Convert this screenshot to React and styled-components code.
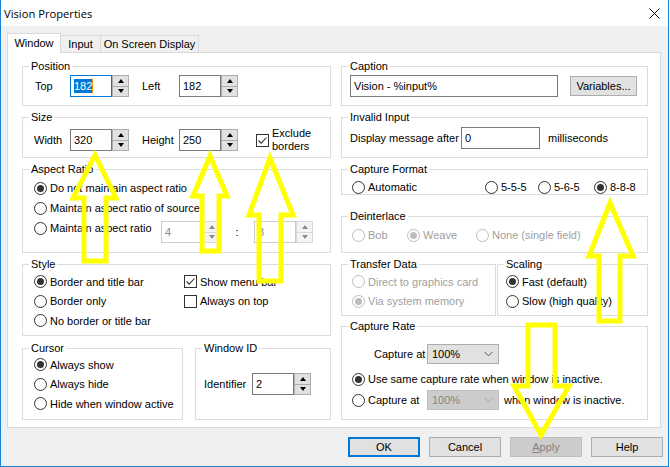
import React from 'react';
import styled, { createGlobalStyle } from 'styled-components';

const GlobalStyle = createGlobalStyle`
  html, body {
    margin: 0;
    padding: 0;
    background: #ffffff;
  }
  body {
    font-family: "Liberation Sans", Arial, sans-serif;
    font-size: 11px;
    color: #000;
  }
`;

const Stage = styled.div`
  position: relative;
  width: 670px;
  height: 467px;
  overflow: hidden;
`;

const Window = styled.div`
  box-sizing: border-box;
  width: 669px;
  height: 467px;
  background: #f0f0f0;
  border: 1px solid #1883d7;
  border-top: none;
  display: flex;
  flex-direction: column;
`;

const TitleBar = styled.div`
  flex: none;
  height: 26px;
  background: #ffffff;
  display: flex;
  align-items: center;
  justify-content: space-between;
  padding: 0 8px 0 3px;
  font-family: "Segoe UI", "Open Sans", "Noto Sans", sans-serif;
  font-size: 11.2px;
`;

const Body = styled.div`
  flex: 1;
  display: flex;
  flex-direction: column;
  padding: 7px 7px 0 6px;
`;

const TabStrip = styled.div`
  position: relative;
  z-index: 1;
  display: flex;
  align-items: flex-end;
  height: 19px;
`;

const Tab = styled.div`
  box-sizing: border-box;
  position: relative;
  z-index: ${p => (p.$active ? 2 : 1)};
  width: ${p => p.$w}px;
  height: ${p => (p.$active ? 20 : 17)}px;
  margin-bottom: ${p => (p.$active ? -1 : 0)}px;
  margin-left: ${p => (p.$first ? 0 : -1)}px;
  padding-bottom: ${p => (p.$active ? 2 : 0)}px;
  background: ${p => (p.$active ? '#ffffff' : '#f0f0f0')};
  border: 1px solid #d9d9d9;
  border-bottom: none;
  display: flex;
  align-items: center;
  justify-content: center;
`;

const Panel = styled.div`
  box-sizing: border-box;
  height: 376px;
  background: #ffffff;
  border: 1px solid #d9d9d9;
  padding: 13px 0 0 14px;
  display: grid;
  grid-template-columns: 309px 307px;
  column-gap: 10px;
  align-items: start;
`;

const Column = styled.div`
  display: flex;
  flex-direction: column;
`;

const Pair = styled.div`
  display: flex;
  gap: ${p => p.$gap}px;
  margin-top: ${p => p.$mt || 0}px;
`;

/* group box: the caption sits on the top border line */
const Group = styled.section`
  box-sizing: border-box;
  flex: ${p => (p.$grow ? '1 1 0' : 'none')};
  margin-top: ${p => p.$mt || 0}px;
  height: ${p => p.$h}px;
  width: ${p => (p.$w ? `${p.$w}px` : 'auto')};
  min-width: 0;
  border: 1px solid #dcdcdc;
  display: flex;
  flex-direction: column;
  align-items: flex-start;
`;

const Legend = styled.div`
  margin: -7px 0 0 6px;
  padding: 0 2px;
  height: 13px;
  line-height: 13px;
  background: #ffffff;
  white-space: nowrap;
`;

const Content = styled.div`
  align-self: stretch;
  padding: ${p => p.$pad};
  display: flex;
  flex-direction: ${p => (p.$row ? 'row' : 'column')};
  align-items: ${p => (p.$row ? 'center' : 'stretch')};
`;

const Row = styled.div`
  display: flex;
  align-items: center;
  height: ${p => p.$h || 22}px;
  margin-top: ${p => p.$mt || 0}px;
`;

const Grid2 = styled.div`
  display: grid;
  grid-template-columns: ${p => p.$cols};
`;

const Label = styled.span`
  flex: none;
  width: ${p => (p.$w ? `${p.$w}px` : 'auto')};
  margin-left: ${p => p.$ml || 0}px;
  white-space: nowrap;
`;

const Spacer = styled.span`
  flex: none;
  width: ${p => p.$w}px;
`;

const TwoLines = styled.span`
  line-height: 13px;
`;

/* radio + checkbox */

const Option = styled.div`
  flex: none;
  display: flex;
  align-items: center;
  height: ${p => p.$h || 19.5}px;
  width: ${p => (p.$w ? `${p.$w}px` : 'auto')};
  color: ${p => (p.$disabled ? '#a0a0a0' : '#000')};
  white-space: nowrap;
`;

const RadioDot = styled.span`
  box-sizing: border-box;
  flex: none;
  width: 13px;
  height: 13px;
  margin-right: 3px;
  border-radius: 50%;
  border: 1px solid ${p => (p.$disabled ? '#bcbcbc' : '#333333')};
  background: #ffffff;
  display: flex;
  align-items: center;
  justify-content: center;

  &::after {
    content: '';
    display: ${p => (p.$checked ? 'block' : 'none')};
    width: 7px;
    height: 7px;
    border-radius: 50%;
    background: ${p => (p.$disabled ? '#bcbcbc' : '#333333')};
  }
`;

const CheckBox = styled.span`
  box-sizing: border-box;
  flex: none;
  width: 13px;
  height: 13px;
  margin-right: 3px;
  border: 1px solid #333333;
  background: #ffffff;
  display: flex;
  align-items: center;
  justify-content: center;
`;

const Radio = ({ children, checked, disabled, w, h }) => (
  <Option $disabled={disabled} $w={w} $h={h}>
    <RadioDot $checked={checked} $disabled={disabled} />
    {children}
  </Option>
);

const Check = ({ children, checked, h }) => (
  <Option $h={h}>
    <CheckBox>
      {checked && (
        <svg width="11" height="11" viewBox="0 0 11 11">
          <path d="M1.5 5.5 L4.2 8.2 L9.5 2.5" fill="none" stroke="#333" strokeWidth="1.1" />
        </svg>
      )}
    </CheckBox>
    {children}
  </Option>
);

/* text boxes and spinners */

const TextBox = styled.div`
  box-sizing: border-box;
  flex: none;
  width: ${p => p.$w}px;
  height: 22px;
  padding-left: 3px;
  border: 1px solid ${p => (p.$focus ? '#0078d7' : p.$disabled ? '#cccccc' : '#7a7a7a')};
  background: #ffffff;
  color: ${p => (p.$disabled ? '#8a8a8a' : '#000')};
  display: flex;
  align-items: center;
  white-space: nowrap;
`;

const Selected = styled.span`
  background: #0078d7;
  color: #ffffff;
  line-height: 14px;
  border-right: 1px solid #ff8c00;
`;

const Spin = styled.div`
  flex: none;
  display: flex;
  height: 22px;
`;

const SpinButtons = styled.div`
  box-sizing: border-box;
  width: 17px;
  height: 22px;
  display: flex;
  flex-direction: column;
`;

const SpinBtn = styled.div`
  box-sizing: border-box;
  flex: 1;
  margin-top: ${p => (p.$down ? -1 : 0)}px;
  background: ${p => (p.$disabled ? '#f4f4f4' : '#e1e1e1')};
  border: 1px solid ${p => (p.$disabled ? '#d9d9d9' : '#adadad')};
  display: flex;
  align-items: center;
  justify-content: center;
`;

const Tri = styled.span`
  width: 0;
  height: 0;
  border-left: 3.5px solid transparent;
  border-right: 3.5px solid transparent;
  ${p =>
    p.$up
      ? `border-bottom: 4px solid ${p.$disabled ? '#8a8a8a' : '#000'};`
      : `border-top: 4px solid ${p.$disabled ? '#8a8a8a' : '#000'};`}
`;

const SpinBox = ({ value, focus, disabled }) => (
  <Spin>
    <TextBox $w={42} $focus={focus} $disabled={disabled}>
      {focus ? <Selected>{value}</Selected> : value}
    </TextBox>
    <SpinButtons>
      <SpinBtn $disabled={disabled}>
        <Tri $up $disabled={disabled} />
      </SpinBtn>
      <SpinBtn $down $disabled={disabled}>
        <Tri $disabled={disabled} />
      </SpinBtn>
    </SpinButtons>
  </Spin>
);

const SpinRowOffset = styled.div`
  display: flex;
  align-items: center;
  align-self: flex-start;
  margin-top: 3px;
`;

const Colon = styled.span`
  flex: none;
  width: 34px;
  text-align: center;
`;

/* combo boxes */

const Combo = styled.div`
  box-sizing: border-box;
  flex: none;
  width: 72px;
  height: 20px;
  padding: 0 5px 0 4px;
  background: ${p => (p.$disabled ? '#cccccc' : '#e1e1e1')};
  border: 1px solid ${p => (p.$disabled ? '#bfbfbf' : '#adadad')};
  color: ${p => (p.$disabled ? '#838383' : '#000')};
  display: flex;
  align-items: center;
  justify-content: space-between;
`;

const Chevron = ({ disabled }) => (
  <svg width="9" height="6" viewBox="0 0 9 6">
    <path d="M0.5 0.8 L4.5 4.8 L8.5 0.8" fill="none" stroke={disabled ? '#a6a6a6' : '#555'} strokeWidth="1" />
  </svg>
);

/* push buttons */

const Button = styled.div`
  box-sizing: border-box;
  flex: none;
  width: ${p => p.$w || 72}px;
  height: 20px;
  margin-left: ${p => p.$ml || 0}px;
  background: ${p => (p.$disabled ? '#cccccc' : '#e1e1e1')};
  border: ${p => (p.$default ? '2px solid #0078d7' : p.$disabled ? '1px solid #bfbfbf' : '1px solid #adadad')};
  color: ${p => (p.$disabled ? '#838383' : '#000')};
  display: flex;
  align-items: center;
  justify-content: center;
  white-space: nowrap;
`;

const Footer = styled.div`
  display: flex;
  justify-content: flex-end;
  gap: 9px;
  margin: 9px -2px 0 0;
`;

const Overlay = styled.svg`
  position: absolute;
  left: 0;
  top: 0;
  width: 670px;
  height: 467px;
  pointer-events: none;
`;

const arrows = [
  '95,155 116,198 106,198 106,261 84,261 84,198 73,198',
  '210,156 227,196 219,196 219,251 202,251 202,196 193,196',
  '270,158 293,215 281,215 281,281 259,281 259,215 249,215',
  '610,203 633,256 620,256 620,321 599,321 599,256 589,256',
  '541,435 569,386 555,386 555,325 528,325 528,386 514,386',
];

export default function App() {
  return (
    <Stage>
      <GlobalStyle />
      <Window>
        <TitleBar>
          <span>Vision Properties</span>
          <svg width="11" height="11" viewBox="0 0 11 11">
            <path d="M0.5 0.5 L10.5 10.5 M10.5 0.5 L0.5 10.5" stroke="#000" strokeWidth="1" />
          </svg>
        </TitleBar>
        <Body>
          <TabStrip>
            <Tab $w={54} $active $first>Window</Tab>
            <Tab $w={41}>Input</Tab>
            <Tab $w={99}>On Screen Display</Tab>
          </TabStrip>
          <Panel>
            <Column>
              <Group $h={40}>
                <Legend>Position</Legend>
                <Content $row $pad="2px 0 0 12px">
                  <Label $w={35}>Top</Label>
                  <SpinBox value="182" focus />
                  <Label $w={37} $ml={13}>Left</Label>
                  <SpinBox value="182" />
                </Content>
              </Group>
              <Group $h={41} $mt={11}>
                <Legend>Size</Legend>
                <Content $row $pad="3px 0 0 11px">
                  <Label $w={36}>Width</Label>
                  <SpinBox value="320" />
                  <Label $w={37} $ml={13}>Height</Label>
                  <SpinBox value="250" />
                  <Spacer $w={18} />
                  <Check checked h={26}>
                    <TwoLines>
                      Exclude
                      <br />
                      borders
                    </TwoLines>
                  </Check>
                </Content>
              </Group>
              <Group $h={84} $mt={11}>
                <Legend>Aspect Ratio</Legend>
                <Content $pad="2px 0 0 11px">
                  <Radio checked h={20}>Do not maintain aspect ratio</Radio>
                  <Radio h={20}>Maintain aspect ratio of source</Radio>
                  <Row $h={20}>
                    <Radio w={127} h={20}>Maintain aspect ratio</Radio>
                    <SpinRowOffset>
                      <SpinBox value="4" disabled />
                      <Colon>:</Colon>
                      <SpinBox value="3" disabled />
                    </SpinRowOffset>
                  </Row>
                </Content>
              </Group>
              <Group $h={72} $mt={11}>
                <Legend>Style</Legend>
                <Content $pad="1px 0 0 11px">
                  <Grid2 $cols="150px 1fr">
                    <Radio checked>Border and title bar</Radio>
                    <Check checked h={19.5}>Show menu bar</Check>
                    <Radio>Border only</Radio>
                    <Check h={19.5}>Always on top</Check>
                    <Radio>No border or title bar</Radio>
                  </Grid2>
                </Content>
              </Group>
              <Pair $gap={12} $mt={12}>
                <Group $h={72} $w={161}>
                  <Legend>Cursor</Legend>
                  <Content $pad="0 0 0 11px">
                    <Radio checked>Always show</Radio>
                    <Radio>Always hide</Radio>
                    <Radio>Hide when window active</Radio>
                  </Content>
                </Group>
                <Group $h={72} $grow>
                  <Legend>Window ID</Legend>
                  <Content $row $pad="18px 0 0 8px">
                    <Label $w={48}>Identifier</Label>
                    <SpinBox value="2" />
                  </Content>
                </Group>
              </Pair>
            </Column>

            <Column>
              <Group $h={40}>
                <Legend>Caption</Legend>
                <Content $row $pad="2px 0 0 8px">
                  <TextBox $w={208}>Vision - %input%</TextBox>
                  <Button $w={67} $ml={12}>Variables...</Button>
                </Content>
              </Group>
              <Group $h={41} $mt={11}>
                <Legend>Invalid Input</Legend>
                <Content $row $pad="3px 0 0 8px">
                  <Label $w={111}>Display message after</Label>
                  <TextBox $w={79}>0</TextBox>
                  <Label $ml={8}>milliseconds</Label>
                </Content>
              </Group>
              <Group $h={26} $mt={11}>
                <Legend>Capture Format</Legend>
                <Content $row $pad="1px 0 0 10px">
                  <Radio w={133} h={20}>Automatic</Radio>
                  <Radio w={53} h={20}>5-5-5</Radio>
                  <Radio w={56} h={20}>5-6-5</Radio>
                  <Radio checked h={20}>8-8-8</Radio>
                </Content>
              </Group>
              <Group $h={37} $mt={21}>
                <Legend>Deinterlace</Legend>
                <Content $row $pad="2px 0 0 10px">
                  <Radio disabled w={55} h={20}>Bob</Radio>
                  <Radio disabled checked w={69} h={20}>Weave</Radio>
                  <Radio disabled h={20}>None (single field)</Radio>
                </Content>
              </Group>
              <Pair $gap={1} $mt={11}>
                <Group $h={52} $w={155}>
                  <Legend>Transfer Data</Legend>
                  <Content $pad="1px 0 0 10px">
                    <Radio disabled>Direct to graphics card</Radio>
                    <Radio disabled checked>Via system memory</Radio>
                  </Content>
                </Group>
                <Group $h={52} $grow>
                  <Legend>Scaling</Legend>
                  <Content $pad="1px 0 0 8px">
                    <Radio checked>Fast (default)</Radio>
                    <Radio>Slow (high quality)</Radio>
                  </Content>
                </Group>
              </Pair>
              <Group $h={94} $mt={10}>
                <Legend>Capture Rate</Legend>
                <Content $pad="11px 0 0 10px">
                  <Row $h={20}>
                    <Label $w={53} $ml={22}>Capture at</Label>
                    <Combo>
                      100%
                      <Chevron />
                    </Combo>
                  </Row>
                  <Row $h={20} $mt={5}>
                    <Radio checked h={20}>Use same capture rate when window is inactive.</Radio>
                  </Row>
                  <Row $h={20} $mt={1}>
                    <Radio w={75} h={20}>Capture at</Radio>
                    <Combo $disabled>
                      100%
                      <Chevron disabled />
                    </Combo>
                    <Label $ml={5}>when window is inactive.</Label>
                  </Row>
                </Content>
              </Group>
            </Column>
          </Panel>
          <Footer>
            <Button $default>OK</Button>
            <Button>Cancel</Button>
            <Button $disabled>
              <u>A</u>pply
            </Button>
            <Button>Help</Button>
          </Footer>
        </Body>
      </Window>
      <Overlay viewBox="0 0 670 467">
        {arrows.map(pts => (
          <polygon key={pts} points={pts} fill="none" stroke="#ffff00" strokeWidth="5" strokeLinejoin="miter" />
        ))}
      </Overlay>
    </Stage>
  );
}
